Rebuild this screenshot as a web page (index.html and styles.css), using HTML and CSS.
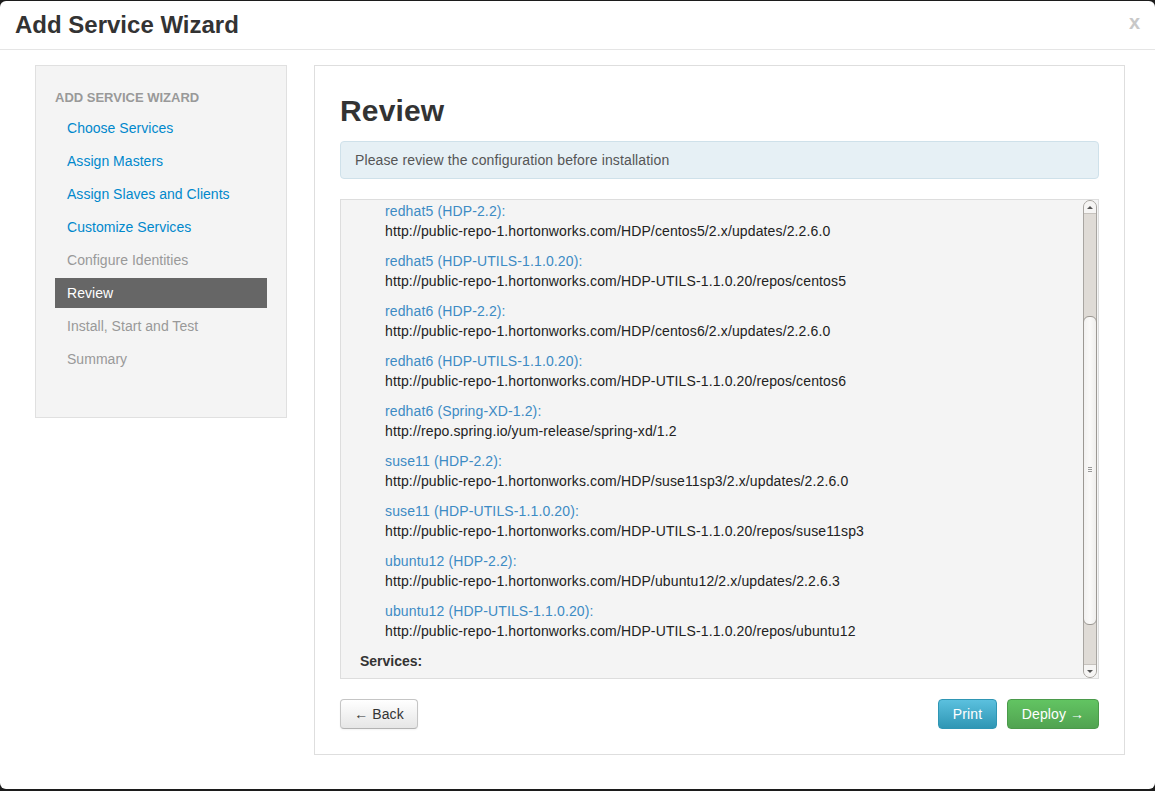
FILE: index.html
```html
<!DOCTYPE html>
<html>
<head>
<meta charset="utf-8">
<link rel="stylesheet" href="styles.css">
</head>
<body>
<div class="modal">
  <div class="modal-header">
    <h3 class="modal-title">Add Service Wizard</h3>
    <span class="close">x</span>
  </div>
  <div class="modal-body">
    <div class="well">
      <div class="nav-header">ADD SERVICE WIZARD</div>
      <ul class="nav-list">
        <li class="nav-item link">Choose Services</li>
        <li class="nav-item link">Assign Masters</li>
        <li class="nav-item link">Assign Slaves and Clients</li>
        <li class="nav-item link">Customize Services</li>
        <li class="nav-item disabled">Configure Identities</li>
        <li class="nav-item active">Review</li>
        <li class="nav-item disabled">Install, Start and Test</li>
        <li class="nav-item disabled">Summary</li>
      </ul>
    </div>
    <div class="main">
      <h2 class="title">Review</h2>
      <div class="alert">Please review the configuration before installation</div>
      <div class="review-box">
        <div class="review-content">
          <div class="repo"><div class="repo-name">redhat5 (HDP-2.2):</div><div class="repo-url">http://public-repo-1.hortonworks.com/HDP/centos5/2.x/updates/2.2.6.0</div></div>
          <div class="repo"><div class="repo-name">redhat5 (HDP-UTILS-1.1.0.20):</div><div class="repo-url">http://public-repo-1.hortonworks.com/HDP-UTILS-1.1.0.20/repos/centos5</div></div>
          <div class="repo"><div class="repo-name">redhat6 (HDP-2.2):</div><div class="repo-url">http://public-repo-1.hortonworks.com/HDP/centos6/2.x/updates/2.2.6.0</div></div>
          <div class="repo"><div class="repo-name">redhat6 (HDP-UTILS-1.1.0.20):</div><div class="repo-url">http://public-repo-1.hortonworks.com/HDP-UTILS-1.1.0.20/repos/centos6</div></div>
          <div class="repo"><div class="repo-name">redhat6 (Spring-XD-1.2):</div><div class="repo-url">http://repo.spring.io/yum-release/spring-xd/1.2</div></div>
          <div class="repo"><div class="repo-name">suse11 (HDP-2.2):</div><div class="repo-url">http://public-repo-1.hortonworks.com/HDP/suse11sp3/2.x/updates/2.2.6.0</div></div>
          <div class="repo"><div class="repo-name">suse11 (HDP-UTILS-1.1.0.20):</div><div class="repo-url">http://public-repo-1.hortonworks.com/HDP-UTILS-1.1.0.20/repos/suse11sp3</div></div>
          <div class="repo"><div class="repo-name">ubuntu12 (HDP-2.2):</div><div class="repo-url">http://public-repo-1.hortonworks.com/HDP/ubuntu12/2.x/updates/2.2.6.3</div></div>
          <div class="repo"><div class="repo-name">ubuntu12 (HDP-UTILS-1.1.0.20):</div><div class="repo-url">http://public-repo-1.hortonworks.com/HDP-UTILS-1.1.0.20/repos/ubuntu12</div></div>
          <div class="section-title">Services:</div>
        </div>
        <div class="scrollbar">
          <div class="sb-btn sb-up"><span class="arrow-up"></span></div>
          <div class="sb-trough sb-trough-top"></div>
          <div class="sb-thumb"><span class="grip"></span></div>
          <div class="sb-trough sb-trough-bottom"></div>
          <div class="sb-btn sb-down"><span class="arrow-down"></span></div>
        </div>
      </div>
      <div class="actions">
        <button class="btn btn-default">&larr; Back</button>
        <div class="right-actions">
          <button class="btn btn-info">Print</button>
          <button class="btn btn-success">Deploy &rarr;</button>
        </div>
      </div>
    </div>
  </div>
</div>
</body>
</html>
```

FILE: styles.css
```css
* { box-sizing: border-box; }
html, body { margin: 0; padding: 0; }
body {
  background: #1c1c1c;
  font-family: "Liberation Sans", Arial, sans-serif;
  font-size: 14px;
  line-height: 20px;
  color: #333;
  width: 1155px;
  height: 791px;
  overflow: hidden;
}
.modal {
  margin-top: 1px;
  height: 788px;
  background: #fff;
  border-radius: 6px;
  overflow: hidden;
}
.modal-header {
  height: 49px;
  border-bottom: 1px solid #e5e5e5;
  display: flex;
  align-items: center;
  justify-content: space-between;
  padding: 0 16px 0 15px;
}
.modal-title {
  margin: 0;
  font-size: 24px;
  font-weight: bold;
  line-height: 30px;
  color: #333;
  padding-bottom: 1px;
}
.close {
  font-size: 20px;
  font-weight: bold;
  color: #c8c8c8;
  line-height: 20px;
  margin-top: -7px;
  margin-right: -1px;
}
.modal-body {
  display: flex;
  align-items: flex-start;
  padding: 15px 30px 0 35px;
  gap: 27px;
}
.well {
  width: 252px;
  background: #f4f4f4;
  border: 1px solid #e0e0e0;
  padding: 22px 19px 43px 19px;
}
.nav-header {
  font-size: 13px;
  font-weight: bold;
  color: #999;
  line-height: 20px;
  margin-bottom: 5px;
}
.nav-list {
  list-style: none;
  margin: 0;
  padding: 0;
}
.nav-item {
  height: 30px;
  line-height: 20px;
  padding: 5px 12px;
  margin-bottom: 3px;
  letter-spacing: 0.03px;
}
.nav-item:last-child { margin-bottom: 0; }
.nav-item.link { color: #0088cc; }
.nav-item.disabled { color: #999; }
.nav-item.active { background: #666; color: #fff; }
.main {
  width: 811px;
  height: 690px;
  border: 1px solid #dedede;
  padding: 25px 25px 0 25px;
}
.title {
  margin: 0;
  font-size: 30px;
  line-height: 40px;
  font-weight: bold;
  color: #333;
  margin-bottom: 10px;
  letter-spacing: 0.15px;
}
.alert {
  height: 38px;
  background: #e6f0f5;
  border: 1px solid #cfe1ea;
  border-radius: 4px;
  color: #555;
  padding: 8px 14px;
  margin-bottom: 20px;
  letter-spacing: 0.12px;
}
.review-box {
  height: 480px;
  background: #f4f4f4;
  border: 1px solid #ddd;
  display: flex;
  overflow: hidden;
}
.review-content {
  flex: 1;
  padding: 1px 20px 0 19px;
  overflow: hidden;
  letter-spacing: 0.13px;
}
.repo {
  padding-left: 25px;
  margin-bottom: 10px;
}
.repo-name { color: #3d8bc4; }
.repo-url { color: #222; }
.section-title { font-weight: bold; color: #333; letter-spacing: 0; }
.scrollbar {
  width: 14px;
  margin: 0 1px 0 0;
  display: flex;
  flex-direction: column;
  background: #dfdbd6;
  border: 1px solid #a8a5a1;
  border-radius: 7px;
}
.sb-btn {
  height: 13px;
  background: #f6f5f4;
  display: flex;
  align-items: center;
  justify-content: center;
}
.sb-up { border-radius: 6px 6px 0 0; border-bottom: 1px solid #c6c2bd; }
.sb-down { border-radius: 0 0 6px 6px; border-top: 1px solid #c6c2bd; }
.arrow-up {
  width: 0; height: 0;
  border-left: 3px solid transparent;
  border-right: 3px solid transparent;
  border-bottom: 3px solid #555;
}
.arrow-down {
  width: 0; height: 0;
  border-left: 3px solid transparent;
  border-right: 3px solid transparent;
  border-top: 3px solid #555;
}
.sb-trough-top { height: 102px; }
.sb-trough-bottom { flex: 1; }
.sb-thumb {
  height: 309px;
  background: linear-gradient(to right, #f2f1f0, #faf9f8 50%, #efeeec);
  border: 1px solid #9c9893;
  border-radius: 6px;
  margin: 0 -1px;
  position: relative;
}
.grip {
  position: absolute;
  left: 4px;
  top: 150px;
  width: 4px;
  height: 5px;
  border-top: 1px solid #999;
  border-bottom: 1px solid #999;
}
.grip::after {
  content: "";
  position: absolute;
  left: 0; right: 0; top: 1px;
  border-top: 1px solid #999;
}
.actions {
  display: flex;
  justify-content: space-between;
  margin-top: 20px;
}
.right-actions { display: flex; gap: 10px; }
.btn {
  font-family: "Liberation Sans", Arial, sans-serif;
  font-size: 14px;
  line-height: 20px;
  height: 30px;
  padding: 4px 12px;
  border-radius: 4px;
  cursor: pointer;
  letter-spacing: 0.1px;
}
.btn-default {
  width: 78px;
  color: #333;
  background: linear-gradient(#ffffff, #e6e6e6);
  border: 1px solid #c5c5c5;
  border-bottom-color: #b3b3b3;
  box-shadow: inset 0 1px 0 rgba(255,255,255,.2), 0 1px 2px rgba(0,0,0,.05);
}
.btn-info {
  width: 59px;
  color: #fff;
  background: linear-gradient(#5bc0de, #2f96b4);
  border: 1px solid #2f96b4;
}
.btn-success {
  width: 92px;
  color: #fff;
  background: linear-gradient(#62c462, #51a351);
  border: 1px solid #4b9a4b;
}
```
